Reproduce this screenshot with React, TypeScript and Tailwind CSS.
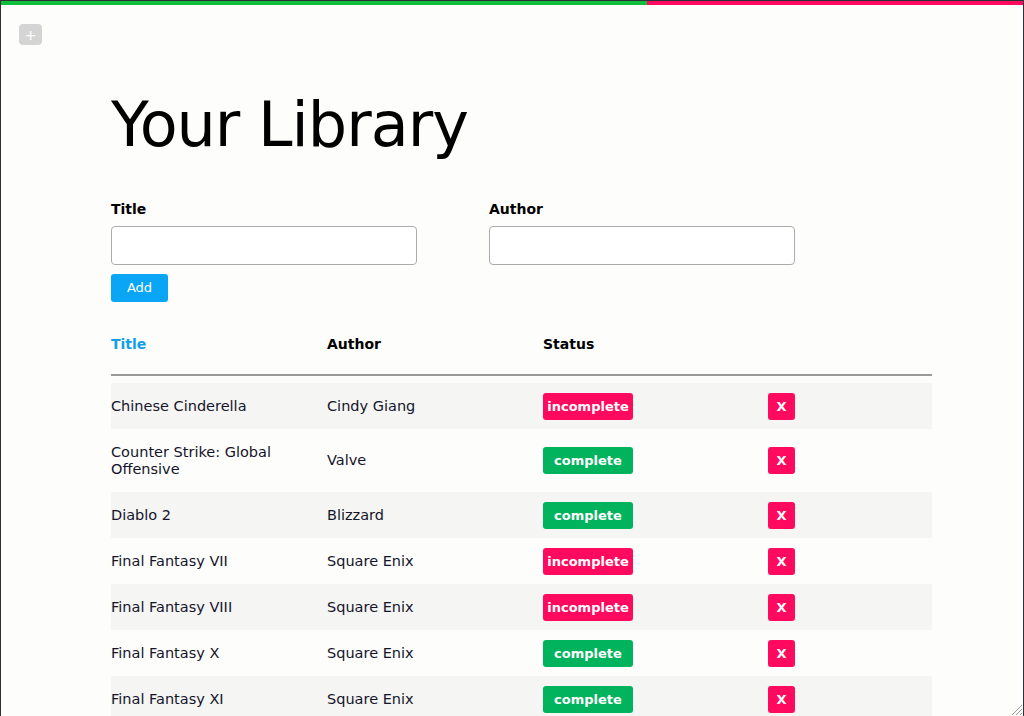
import React from "react";

type Book = { title: string; author: string; done: boolean; tall?: boolean };

const books: Book[] = [
  { title: "Chinese Cinderella", author: "Cindy Giang", done: false },
  { title: "Counter Strike: Global Offensive", author: "Valve", done: true, tall: true },
  { title: "Diablo 2", author: "Blizzard", done: true },
  { title: "Final Fantasy VII", author: "Square Enix", done: false },
  { title: "Final Fantasy VIII", author: "Square Enix", done: false },
  { title: "Final Fantasy X", author: "Square Enix", done: true },
  { title: "Final Fantasy XI", author: "Square Enix", done: true },
];

export default function App() {
  return (
    <div
      className="relative w-[1024px] h-[716px] overflow-hidden border border-b-0 border-[#2f2f38] bg-[#fdfdfb] text-[#14142b]"
      style={{ fontFamily: '"DejaVu Sans", "Open Sans", sans-serif' }}
    >
      <div className="flex h-[4px]">
        <div className="w-[646px] bg-[#0fbf3c]" />
        <div className="flex-1 bg-[#ff0a5e]" />
      </div>
      <div className="pl-[18px] pt-[19px]">
        <button className="flex h-[21px] w-[23px] items-center justify-center rounded-[4px] bg-[#d4d4d4] text-[14px] leading-none text-white">
          +
        </button>
      </div>
      <div className="ml-[110px] w-[821px]">
        <h1 className="mt-[42px] text-[62px] leading-[76px] font-normal text-black tracking-[-1px]">Your Library</h1>
        <div className="mt-[37px] flex gap-[72px]">
          <div className="flex flex-col">
            <label className="text-[14px] font-bold leading-[18px] text-black">Title</label>
            <input className="mt-[8px] h-[39px] w-[306px] rounded-[4px] border border-[#ababab] bg-white" />
          </div>
          <div className="flex flex-col">
            <label className="text-[14px] font-bold leading-[18px] text-black">Author</label>
            <input className="mt-[8px] h-[39px] w-[306px] rounded-[4px] border border-[#ababab] bg-white" />
          </div>
        </div>
        <button className="mt-[9px] h-[28px] w-[57px] rounded-[3px] bg-[#0aa6f5] text-[13px] text-white">Add</button>
        <div className="mt-[32px] grid grid-cols-[216px_216px_216px_1fr] h-[40px] items-start text-[14px] font-bold">
          <div className="text-[#14a0e8]">Title</div>
          <div className="text-black">Author</div>
          <div className="text-black">Status</div>
          <div />
        </div>
        <div className="h-[2px] bg-[#9a9a9a]" />
        <div className="mt-[7px]">
          {books.map((b, i) => (
            <div
              key={b.title}
              className={`grid grid-cols-[216px_216px_225px_1fr] items-center text-[14.5px] leading-[17px] ${
                b.tall ? "h-[63px]" : "h-[46px]"
              } ${i % 2 === 0 ? "bg-[#f5f5f4]" : ""}`}
            >
              <div className="pr-[20px]">{b.title}</div>
              <div>{b.author}</div>
              <div>
                <span
                  className={`inline-flex h-[27px] w-[90px] items-center justify-center rounded-[3px] text-[13px] font-bold text-white ${
                    b.done ? "bg-[#00b35c]" : "bg-[#ff0a5e]"
                  }`}
                >
                  {b.done ? "complete" : "incomplete"}
                </span>
              </div>
              <div>
                <button className="flex h-[27px] w-[27px] items-center justify-center rounded-[3px] bg-[#ff0a5e] text-[13px] font-bold text-white">
                  X
                </button>
              </div>
            </div>
          ))}
        </div>
      </div>
      <svg className="absolute right-0 bottom-0" width="14" height="14" viewBox="0 0 14 14">
        <line x1="13" y1="3" x2="3" y2="13" stroke="#9a9a9a" strokeWidth="1" />
        <line x1="13" y1="7" x2="7" y2="13" stroke="#9a9a9a" strokeWidth="1" />
        <line x1="13" y1="11" x2="11" y2="13" stroke="#9a9a9a" strokeWidth="1" />
      </svg>
    </div>
  );
}
